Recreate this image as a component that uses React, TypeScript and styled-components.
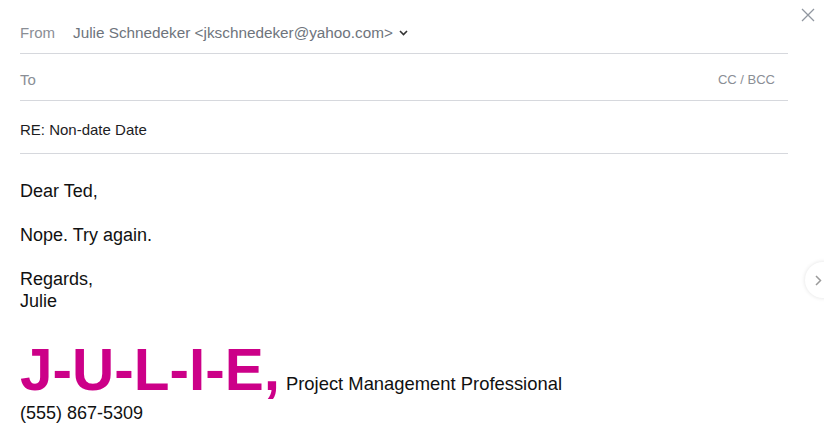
import React from "react";
import styled, { createGlobalStyle } from "styled-components";

const Global = createGlobalStyle`
  html, body { margin: 0; padding: 0; background: #fff; }
  body { font-family: "Liberation Sans", Arial, sans-serif; overflow: hidden; }
`;

const Page = styled.div`
  position: relative;
  width: 824px;
  height: 444px;
  overflow: hidden;
  background: #fff;
`;

const Composer = styled.div`
  width: 768px;
  margin-left: 20px;
`;

const Field = styled.div<{ $top: number; $bottom: number }>`
  display: flex;
  align-items: center;
  padding-top: ${(p) => p.$top}px;
  padding-bottom: ${(p) => p.$bottom}px;
  border-bottom: 1px solid #d6d8dd;
  font-size: 15px;
  line-height: 18px;
`;

const Label = styled.span`
  color: #8a8e95;
  width: 53px;
`;

const FromValue = styled.span`
  color: #6e747c;
  font-size: 15.3px;
  display: flex;
  align-items: center;
  gap: 6px;
`;

const Spacer = styled.span`
  flex: 1;
`;

const CcLink = styled.span`
  color: #8a8e95;
  font-size: 13px;
  margin-right: 13px;
`;

const Subject = styled.span`
  color: #1d1d1f;
`;

const Body = styled.div`
  padding-top: 26px;
  font-size: 18px;
  line-height: 22px;
  color: #111;
`;

const Para = styled.p<{ $last?: boolean }>`
  margin: 0 0 ${(p) => (p.$last ? 0 : 22)}px 0;
`;

const Signature = styled.div`
  margin-top: 29px;
  display: flex;
  align-items: baseline;
`;

const BigName = styled.span`
  font-size: 58.5px;
  line-height: 58px;
  font-weight: bold;
  color: #cc0088;
  margin-right: 6px;
`;

const Title = styled.span`
  font-size: 18.4px;
  color: #111;
`;

const Phone = styled.div`
  margin-top: 3px;
  font-size: 18px;
  line-height: 22px;
  color: #111;
`;

const CloseButton = styled.button`
  position: absolute;
  top: 7px;
  right: 8px;
  width: 16px;
  height: 16px;
  padding: 0;
  border: none;
  background: none;
  display: flex;
  align-items: center;
  justify-content: center;
`;

const NextButton = styled.button`
  position: absolute;
  top: 262px;
  left: 805px;
  width: 36px;
  height: 36px;
  border-radius: 50%;
  border: none;
  background: #fff;
  box-shadow: 0 0 4px rgba(0, 0, 0, 0.12);
  padding: 0 0 0 10px;
  display: flex;
  align-items: center;
`;

export default function App() {
  return (
    <>
      <Global />
      <Page>
        <Composer>
          <Field $top={24} $bottom={11}>
            <Label>From</Label>
            <FromValue>
              Julie Schnedeker &lt;jkschnedeker@yahoo.com&gt;
              <svg width="9" height="6" viewBox="0 0 9 6">
                <path d="M1 1l3.5 3.5L8 1" stroke="#333" strokeWidth="1.6" fill="none" />
              </svg>
            </FromValue>
          </Field>
          <Field $top={17} $bottom={11}>
            <Label>To</Label>
            <Spacer />
            <CcLink>CC / BCC</CcLink>
          </Field>
          <Field $top={20} $bottom={14}>
            <Subject>RE: Non-date Date</Subject>
          </Field>
          <Body>
            <Para>Dear Ted,</Para>
            <Para>Nope. Try again.</Para>
            <Para $last>
              Regards,
              <br />
              Julie
            </Para>
          </Body>
          <Signature>
            <BigName>J-U-L-I-E,</BigName>
            <Title>Project Management Professional</Title>
          </Signature>
          <Phone>(555) 867-5309</Phone>
        </Composer>
        <CloseButton aria-label="Close">
          <svg width="14" height="14" viewBox="0 0 14 14">
            <path d="M1 1l12 12M13 1L1 13" stroke="#9197a0" strokeWidth="1.3" fill="none" />
          </svg>
        </CloseButton>
        <NextButton aria-label="Next">
          <svg width="7" height="11" viewBox="0 0 7 11">
            <path d="M1 1l4.5 4.5L1 10" stroke="#9a9a9a" strokeWidth="1.5" fill="none" />
          </svg>
        </NextButton>
      </Page>
    </>
  );
}
